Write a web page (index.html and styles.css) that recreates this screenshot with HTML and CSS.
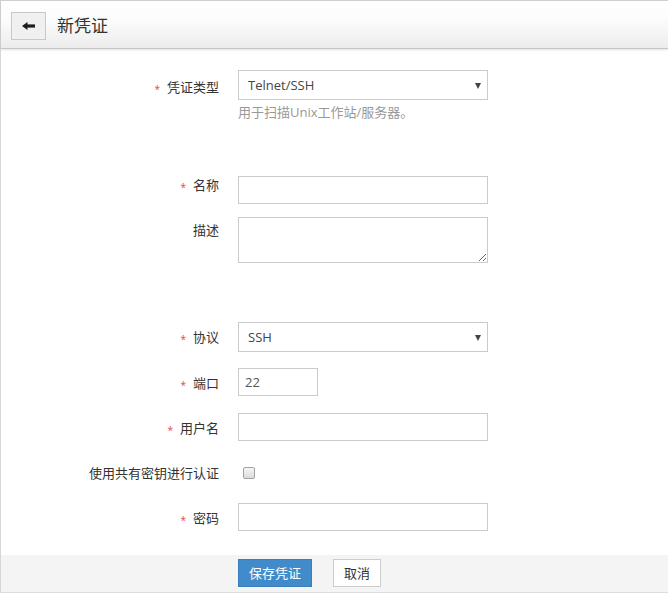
FILE: index.html
```html
<!DOCTYPE html>
<html lang="zh-CN">
<head>
<meta charset="utf-8">
<title>新凭证</title>
<link rel="stylesheet" href="styles.css">
</head>
<body>
<div class="page">
  <header class="topbar">
    <button class="back" type="button" aria-label="返回">
      <svg width="13" height="8" viewBox="0 0 13 8"><polygon points="0,4 5.5,0 5.5,8" fill="#1e1e1e"/><rect x="5" y="2.4" width="8" height="3.2" fill="#1e1e1e"/></svg>
    </button>
    <h1 class="title">新凭证</h1>
  </header>

  <main class="form">
    <div class="row row-type">
      <label class="label lb-type"><span class="req">*</span>凭证类型</label>
      <div class="field">
        <div class="select-wrap">
          <select class="select"><option>Telnet/SSH</option></select>
        </div>
        <div class="help">用于扫描Unix工作站/服务器。</div>
      </div>
    </div>

    <div class="row row-name">
      <label class="label lb-name"><span class="req">*</span>名称</label>
      <div class="field"><input class="input" type="text"></div>
    </div>

    <div class="row row-desc">
      <label class="label lb-desc">描述</label>
      <div class="field"><textarea class="textarea"></textarea></div>
    </div>

    <div class="row row-proto">
      <label class="label"><span class="req">*</span>协议</label>
      <div class="field">
        <div class="select-wrap">
          <select class="select"><option>SSH</option></select>
        </div>
      </div>
    </div>

    <div class="row row-port">
      <label class="label"><span class="req">*</span>端口</label>
      <div class="field"><input class="input input-short" type="text" value="22"></div>
    </div>

    <div class="row row-user">
      <label class="label"><span class="req">*</span>用户名</label>
      <div class="field"><input class="input" type="text"></div>
    </div>

    <div class="row row-key">
      <label class="label lb-key">使用共有密钥进行认证</label>
      <div class="field field-check"><input class="check" type="checkbox"></div>
    </div>

    <div class="row row-pass">
      <label class="label"><span class="req">*</span>密码</label>
      <div class="field"><input class="input" type="password"></div>
    </div>
  </main>

  <footer class="actions">
    <button class="btn btn-primary" type="button">保存凭证</button>
    <button class="btn btn-default" type="button">取消</button>
  </footer>
</div>
</body>
</html>
```

FILE: styles.css
```css
html, body {
  margin: 0;
  padding: 0;
  background: #fff;
}

body {
  font-family: "Open Sans", "Noto Sans CJK SC", sans-serif;
  font-size: 13px;
  color: #333;
}

.page {
  width: 668px;
  height: 593px;
  box-sizing: border-box;
  border-left: 1px solid #d6d6d6;
  border-bottom: 1px solid #dcdcdc;
  display: flex;
  flex-direction: column;
}

.topbar {
  height: 47px;
  border-top: 1px solid #cfcfcf;
  border-bottom: 1px solid #c6c6c6;
  background: linear-gradient(to bottom, #ffffff 0%, #fcfcfc 40%, #ececec 100%);
  box-shadow: 0 1px 2px rgba(0, 0, 0, 0.12);
  display: flex;
  align-items: center;
  padding-left: 10px;
  position: relative;
  z-index: 1;
}

.back {
  width: 35px;
  height: 28px;
  box-sizing: border-box;
  margin: 0;
  margin-top: 2px;
  padding: 0;
  border: 1px solid #c8c8c8;
  background: #f0f0f0;
  display: flex;
  align-items: center;
  justify-content: center;
}

.title {
  margin: 0 0 0 11px;
  font-size: 17px;
  font-weight: normal;
  color: #333;
  font-family: "Noto Sans CJK SC", sans-serif;
  line-height: 24px;
}

.form {
  flex: 1;
}

.row {
  display: flex;
  align-items: flex-start;
}

.label {
  width: 218px;
  box-sizing: border-box;
  text-align: right;
  line-height: 20px;
  padding-top: 5px;
  color: #333;
  font-family: "Noto Sans CJK SC", sans-serif;
  white-space: nowrap;
}

.req {
  color: #e8414f;
  font-size: 10px;
  margin-right: 7px;
  position: relative;
  top: 1px;
  font-family: "Open Sans", sans-serif;
}

.field {
  margin-left: 19px;
  width: 250px;
}

.row-type { margin-top: 21px; }
.row-name { margin-top: 55px; }
.row-desc { margin-top: 13px; }
.row-proto { margin-top: 59px; }
.row-port { margin-top: 16px; }
.row-user { margin-top: 17px; }
.row-key { margin-top: 18px; }
.row-pass { margin-top: 16px; }

.lb-type { padding-top: 7px; }
.lb-name { padding-top: 0; margin-top: -1px; }
.lb-desc { padding-top: 3px; }
.lb-key { padding-top: 4px; }

.select-wrap {
  position: relative;
  width: 250px;
}

.select-wrap::after {
  content: "";
  position: absolute;
  right: 7px;
  top: 13px;
  width: 0;
  height: 0;
  border-left: 3.5px solid transparent;
  border-right: 3.5px solid transparent;
  border-top: 6px solid #444;
  pointer-events: none;
}

.select {
  -webkit-appearance: none;
  appearance: none;
  display: block;
  width: 250px;
  height: 30px;
  box-sizing: border-box;
  margin: 0;
  padding: 0 20px 0 9px;
  border: 1px solid #cbcbcb;
  border-radius: 0;
  background: #fff;
  font-family: "Open Sans", "Noto Sans CJK SC", sans-serif;
  font-size: 13px;
  color: #444;
  outline: none;
}

.help {
  margin-top: 3px;
  line-height: 18px;
  color: #999;
  font-size: 13px;
  white-space: nowrap;
}

.input {
  display: block;
  width: 250px;
  height: 28px;
  box-sizing: border-box;
  margin: 0;
  padding: 0 6px;
  border: 1px solid #cbcbcb;
  border-radius: 0;
  background: #fff;
  font-family: "Open Sans", "Noto Sans CJK SC", sans-serif;
  font-size: 13px;
  color: #555;
  outline: none;
}

.input-short {
  width: 80px;
}

.textarea {
  display: block;
  width: 250px;
  height: 46px;
  box-sizing: border-box;
  margin: 0;
  padding: 4px 6px;
  border: 1px solid #cbcbcb;
  border-radius: 0;
  font-family: "Open Sans", "Noto Sans CJK SC", sans-serif;
  font-size: 13px;
  color: #555;
  outline: none;
}

.field-check {
  height: 28px;
  display: flex;
  align-items: center;
}

.check {
  -webkit-appearance: none;
  appearance: none;
  width: 12px;
  height: 12px;
  box-sizing: border-box;
  margin: 0 0 0 5px;
  border: 1px solid #a3a3a3;
  border-radius: 2px;
  background: linear-gradient(to bottom, #f5f5f5, #dcdcdc);
}

.actions {
  height: 37px;
  background: #f4f4f4;
  display: flex;
  align-items: flex-start;
  padding-top: 4px;
  padding-left: 237px;
  box-sizing: border-box;
}

.btn {
  height: 28px;
  box-sizing: border-box;
  margin: 0;
  padding: 0;
  border-radius: 0;
  font-family: "Noto Sans CJK SC", sans-serif;
  font-size: 13px;
  line-height: 26px;
  white-space: nowrap;
  text-align: center;
  cursor: pointer;
}

.btn-primary {
  width: 74px;
  background: #428bca;
  border: 1px solid #3a7fbd;
  color: #fff;
}

.btn-default {
  width: 48px;
  margin-left: 21px;
  background: #fff;
  border: 1px solid #cccccc;
  color: #333;
}
```
